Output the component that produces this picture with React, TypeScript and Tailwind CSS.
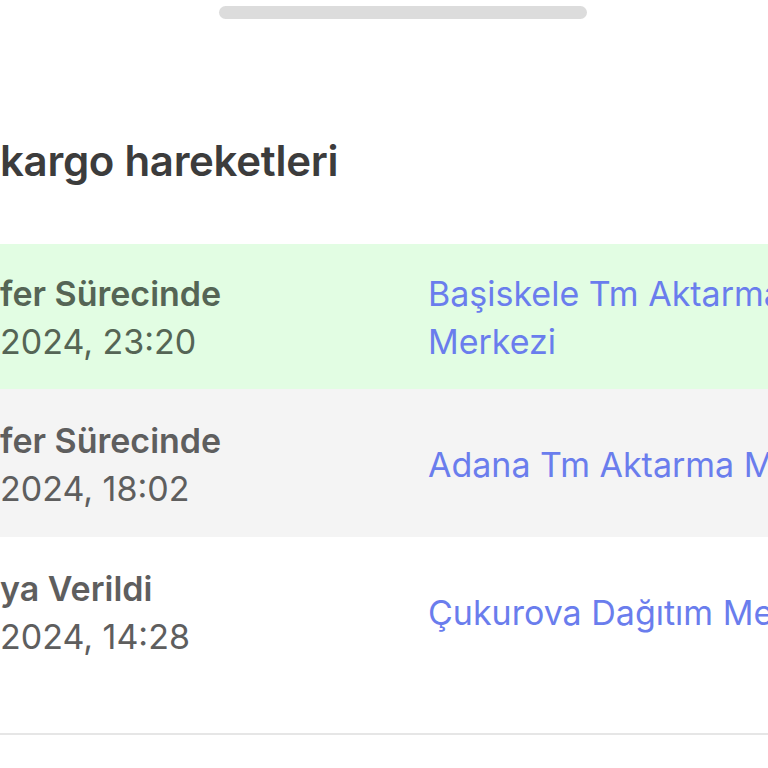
const rows = [
  {
    status: "Transfer Sürecinde",
    date: "12 Mart 2024, 23:20",
    place: "Başiskele Tm Aktarma Merkezi",
    bg: "bg-[#e2fde3]",
    text: "text-[#556555]",
    pad: "pt-[26px] pb-[23px]",
  },
  {
    status: "Transfer Sürecinde",
    date: "12 Mart 2024, 18:02",
    place: "Adana Tm Aktarma Merkezi",
    bg: "bg-[#f4f4f4]",
    text: "text-[#5e5e5e]",
    pad: "pt-[28px] pb-[24px]",
  },
  {
    status: "Kuryeya Verildi",
    date: "12 Mart 2024, 14:28",
    place: "Çukurova Dağıtım Merkezi",
    bg: "bg-white",
    text: "text-[#5e5e5e]",
    pad: "pt-[28px] pb-[72px]",
  },
];

// the left part of each label runs off the left edge of the picture
function Clipped({ full, keep }: { full: string; keep: number }) {
  const head = full.slice(0, full.length - keep);
  const tail = full.slice(full.length - keep);
  return (
    <span className="relative whitespace-nowrap">
      <span className="absolute right-full top-0">{head}</span>
      {tail}
    </span>
  );
}

export default function App() {
  return (
    <div
      className="w-[768px] h-[768px] overflow-hidden bg-white"
      style={{ fontFamily: "Inter, 'Noto Sans', sans-serif" }}
    >
      {/* ── Sheet handle ───────────────────────────────────────── */}
      <div className="pt-[6px] pl-[219px]">
        <div className="w-[368px] h-[13px] rounded-full bg-[#dcdcdc]" />
      </div>

      {/* ── Title ──────────────────────────────────────────────── */}
      <h2 className="mt-[119px] text-[42px] leading-[46px] font-semibold tracking-[-0.3px] text-[#3c3c3c] whitespace-nowrap">
        <Clipped full="Tüm kargo hareketleri" keep={17} />
      </h2>

      {/* ── Movements ──────────────────────────────────────────── */}
      <div className="mt-[60px] w-[960px] border-b-2 border-[#e6e6e6]">
        {rows.map((r, i) => (
          <div key={i} className={`flex items-center ${r.bg} ${r.pad}`}>
            <div className={`w-[400px] shrink-0 text-[34px] leading-[48px] ${r.text}`}>
              <div className="font-semibold">
                <Clipped full={r.status} keep={i === 2 ? 10 : 13} />
              </div>
              <div>
                <Clipped full={r.date} keep={11} />
              </div>
            </div>
            <div className="ml-[28px] w-[485px] text-[34px] leading-[48px] text-[#6a7ded]">
              {r.place}
            </div>
          </div>
        ))}
      </div>
    </div>
  );
}
